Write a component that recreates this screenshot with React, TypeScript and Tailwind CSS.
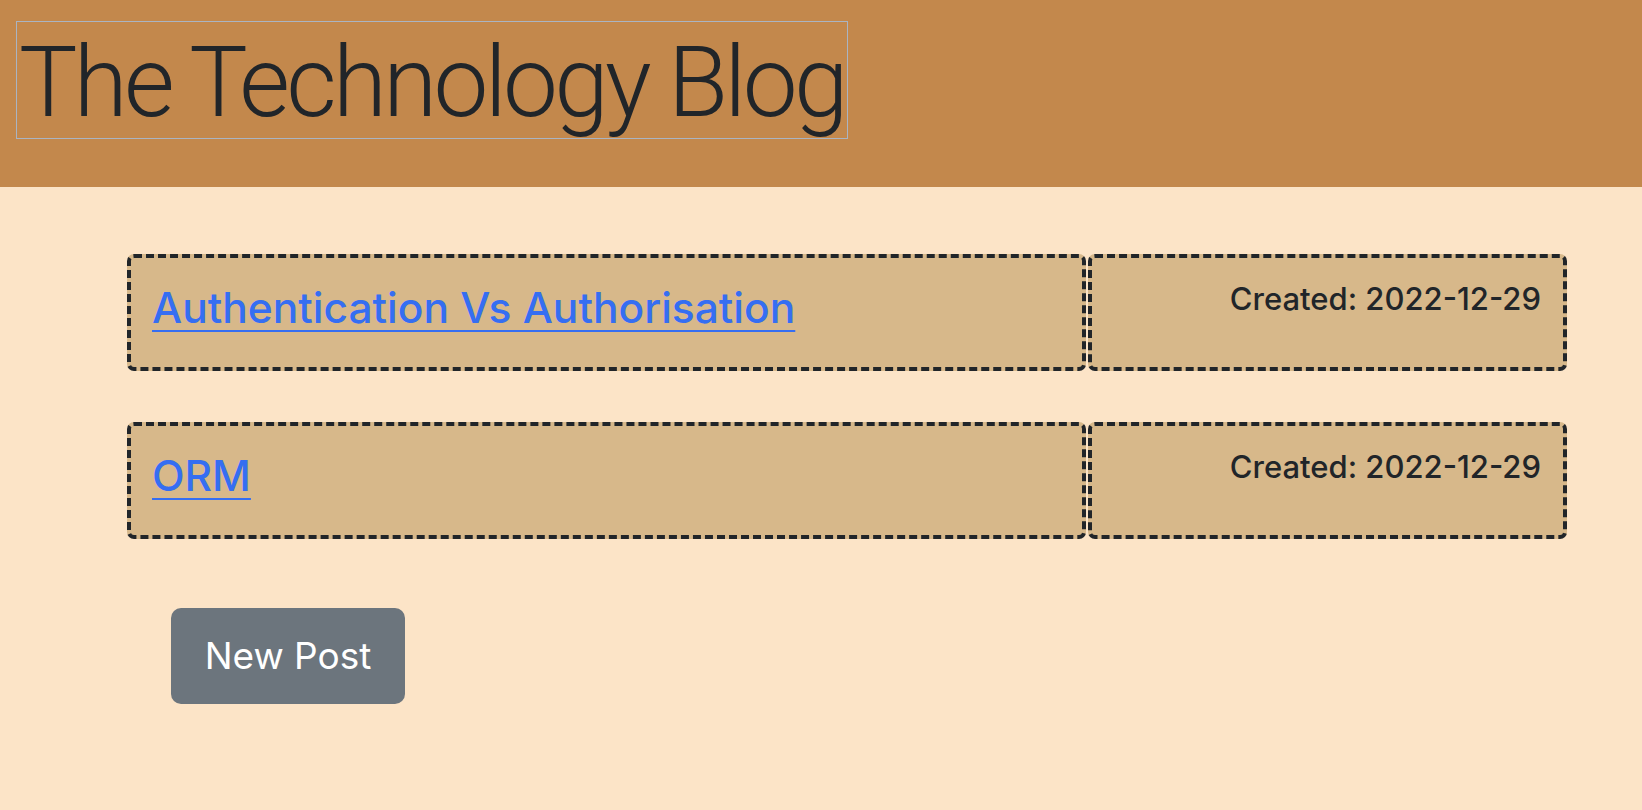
const posts = [
  { title: "Authentication Vs Authorisation", created: "2022-12-29" },
  { title: "ORM", created: "2022-12-29" },
]

export default function App() {
  return (
    <div className="min-h-[810px] bg-[#fce4c7] text-[#212529] font-['Inter',sans-serif]">
      {/* Header */}
      <header className="h-[187px] bg-[#c3884c] pt-[22px] pl-[17px]">
        <h1 className="inline-block outline outline-1 outline-[#aab4c2] font-['Roboto',sans-serif] text-[98px] leading-[110px] font-light tracking-[-3.7px] pt-[6px] pl-[2px] pr-[2px]">
          The Technology Blog
        </h1>
      </header>

      {/* Posts */}
      <main className="pl-[127px] pr-[75px] pt-[67px]">
        <div className="flex flex-col gap-[51px]">
          {posts.map((post) => (
            <div key={post.title} className="grid grid-cols-[2fr_1fr] gap-[2px] h-[117px]">
              <div className="bg-[#d7b88a] border-4 border-dashed border-[#212529] rounded-[7px] pl-[21px] pt-[25px]">
                <a href="#" className="text-[42.5px] leading-[50px] font-medium text-[#356ef2] underline underline-offset-[7px] decoration-2">
                  {post.title}
                </a>
              </div>
              <div className="bg-[#d7b88a] border-4 border-dashed border-[#212529] rounded-[7px] pr-[22px] pt-[22px] text-right">
                <h3 className="text-[31px] leading-[38px] font-medium">Created: {post.created}</h3>
              </div>
            </div>
          ))}
        </div>

        <button className="mt-[69px] ml-[44px] w-[234px] h-[96px] rounded-[10px] bg-[#6c757d] text-white text-[37px]">
          New Post
        </button>
      </main>
    </div>
  )
}
